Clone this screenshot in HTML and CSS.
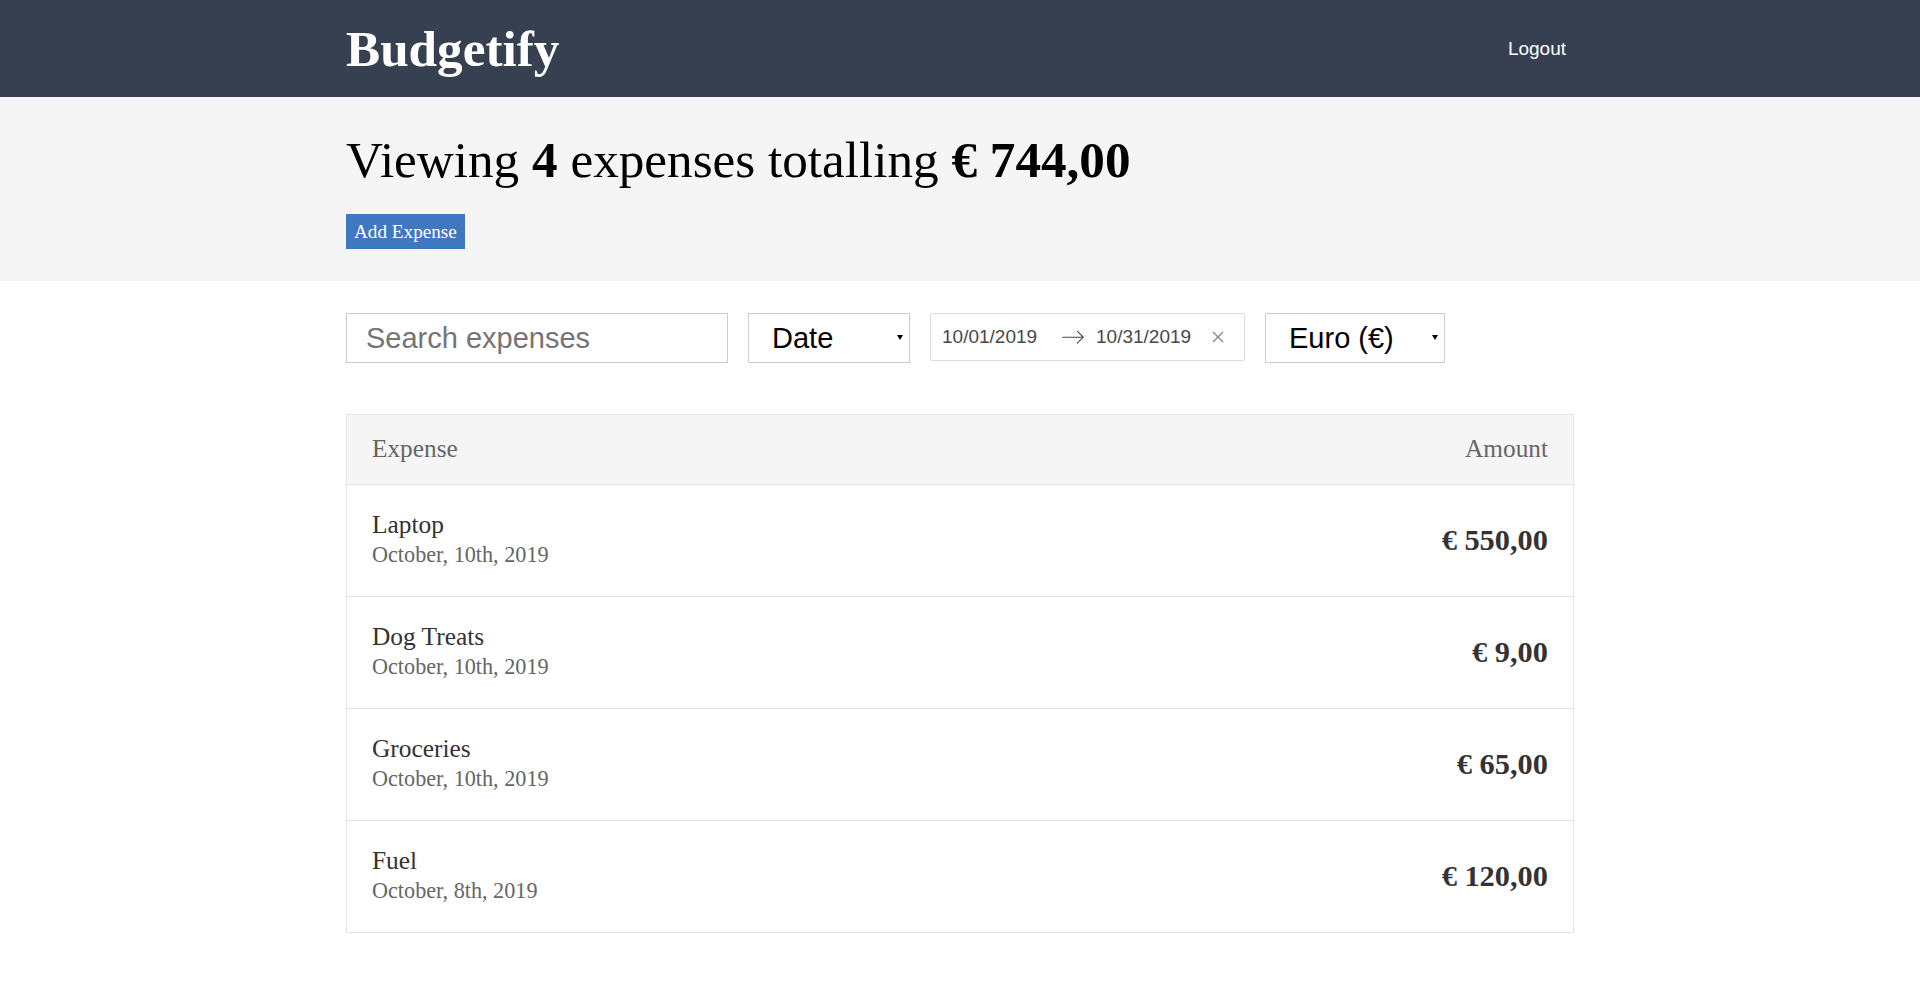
FILE: index.html
```html
<!DOCTYPE html>
<html lang="en">
<head>
<meta charset="utf-8">
<title>Budgetify</title>
<link rel="stylesheet" href="styles.css">
</head>
<body>
<header class="header">
  <div class="container header__content">
    <h1 class="header__title">Budgetify</h1>
    <button class="logout">Logout</button>
  </div>
</header>

<div class="page-header">
  <div class="container page-header__content">
    <h1 class="page-header__title">Viewing <b>4</b> expenses totalling <b>€ 744,00</b></h1>
    <button class="add-btn">Add Expense</button>
  </div>
</div>

<main class="container">
  <div class="filters">
    <input class="text-input" type="text" placeholder="Search expenses">
    <div class="select-wrap">
      <select class="select select--sort">
        <option>Date</option>
        <option>Amount</option>
      </select>
    </div>
    <div class="date-range">
      <input class="date-input" type="text" value="10/01/2019">
      <span class="date-arrow">
        <svg width="24" height="24" viewBox="0 0 1000 1000"><path d="M694.4 242.4l249.1 249.1c11 11 11 21 0 32L694.4 772.7c-5 5-10 7-16 7s-11-2-16-7c-11-11-11-21 0-32l210.1-210.1H67.1c-13 0-23-10-23-23s10-23 23-23h805.4L662.4 274.5c-21-21.1 11-53.1 32-32.1z"/></svg>
      </span>
      <input class="date-input date-input--end" type="text" value="10/31/2019">
      <span class="date-clear">
        <svg width="12" height="12" viewBox="0 0 12 12"><path d="M1 1L11 11M11 1L1 11"/></svg>
      </span>
    </div>
    <div class="select-wrap">
      <select class="select select--currency">
        <option>Euro (€)</option>
        <option>Dollar ($)</option>
      </select>
    </div>
  </div>

  <div class="list">
    <div class="list-header">
      <span>Expense</span>
      <span>Amount</span>
    </div>
    <div class="list-item">
      <div>
        <h3 class="item-title">Laptop</h3>
        <div class="item-date">October, 10th, 2019</div>
      </div>
      <h3 class="item-amount">€ 550,00</h3>
    </div>
    <div class="list-item">
      <div>
        <h3 class="item-title">Dog Treats</h3>
        <div class="item-date">October, 10th, 2019</div>
      </div>
      <h3 class="item-amount">€ 9,00</h3>
    </div>
    <div class="list-item">
      <div>
        <h3 class="item-title">Groceries</h3>
        <div class="item-date">October, 10th, 2019</div>
      </div>
      <h3 class="item-amount">€ 65,00</h3>
    </div>
    <div class="list-item">
      <div>
        <h3 class="item-title">Fuel</h3>
        <div class="item-date">October, 8th, 2019</div>
      </div>
      <h3 class="item-amount">€ 120,00</h3>
    </div>
  </div>
</main>
</body>
</html>
```

FILE: styles.css
```css
* { box-sizing: border-box; }

body {
  margin: 0;
  font-family: "Liberation Serif", "Times New Roman", serif;
  color: #333;
  background: #fff;
}

.container {
  width: 1228px;
  margin: 0 auto;
}

/* Top header */
.header {
  background: #364051;
}
.header__content {
  height: 97px;
  display: flex;
  align-items: center;
  justify-content: space-between;
}
.header__title {
  margin: 0;
  font-size: 51.2px;
  font-weight: 700;
  line-height: normal;
  color: #fff;
}
.logout {
  background: none;
  border: 0;
  color: #fff;
  font-family: "Liberation Sans", Arial, sans-serif;
  font-size: 19px;
  padding: 0 8px;
  cursor: pointer;
}

/* Page header band */
.page-header {
  background: #f5f5f5;
  padding: 33px 0 32px;
}
.page-header__content {
  display: flex;
  flex-direction: column;
  align-items: flex-start;
}
.page-header__title {
  margin: 0 0 25px;
  font-size: 51.2px;
  font-weight: 400;
  line-height: normal;
  color: #000;
}
.add-btn {
  background: #4078c0;
  color: #fff;
  border: 0;
  font-family: "Liberation Serif", "Times New Roman", serif;
  font-size: 19.2px;
  line-height: 23px;
  padding: 6px 8px;
  cursor: pointer;
}

/* Filters */
.filters {
  display: flex;
  align-items: flex-start;
  gap: 20px;
  margin: 32px 0 51px;
}
.text-input {
  width: 382px;
  height: 50px;
  border: 1px solid #cacccd;
  border-radius: 0;
  padding: 0 19px;
  font-family: "Liberation Sans", Arial, sans-serif;
  font-size: 29px;
  color: #000;
  outline: none;
}
.text-input::placeholder {
  color: #757575;
}
.select-wrap {
  position: relative;
}
.select-wrap::after {
  content: "";
  position: absolute;
  right: 7px;
  top: 22px;
  border-left: 3px solid transparent;
  border-right: 3px solid transparent;
  border-top: 5px solid #000;
  pointer-events: none;
}
.select {
  appearance: none;
  -webkit-appearance: none;
  height: 50px;
  border: 1px solid #cacccd;
  border-radius: 0;
  background: #fff;
  padding: 0 0 0 23px;
  font-family: "Liberation Sans", Arial, sans-serif;
  font-size: 29px;
  color: #000;
  outline: none;
}
.select--sort { width: 162px; }
.select--currency { width: 180px; }

.date-range {
  width: 315px;
  height: 48px;
  display: flex;
  align-items: center;
  border: 1px solid #dbdbdb;
  border-radius: 2px;
  background: #fff;
}
.date-input {
  width: 130px;
  border: 0;
  border-bottom: 2px solid transparent;
  padding: 11px 11px 9px;
  font-family: "Liberation Sans", Arial, sans-serif;
  font-size: 19px;
  line-height: 24px;
  color: #484848;
  background: transparent;
  outline: none;
}
.date-input--end {
  width: 120px;
}
.date-arrow {
  display: flex;
  width: 24px;
  height: 24px;
}
.date-arrow svg {
  fill: #484848;
}
.date-clear {
  display: flex;
  margin-left: 7px;
}
.date-clear svg {
  stroke: #82888a;
  stroke-width: 1.4;
  fill: none;
}

/* Expense list */
.list {
  border: 1px solid #e5e5e5;
}
.list-header {
  display: flex;
  justify-content: space-between;
  background: #f5f5f5;
  padding: 19px 25px 21px;
  font-size: 25.3px;
  line-height: 29px;
  color: #666;
  border-bottom: 1px solid #e5e5e5;
}
.list-item {
  display: flex;
  justify-content: space-between;
  align-items: center;
  padding: 25px;
  border-bottom: 1px solid #e5e5e5;
}
.list-item:last-child {
  border-bottom: 0;
}
.item-title {
  margin: 0;
  font-size: 25.4px;
  font-weight: 400;
  line-height: 28px;
  color: #333;
}
.item-date {
  font-size: 22.2px;
  line-height: 33px;
  color: #666;
}
.item-amount {
  margin: 0;
  font-size: 30.4px;
  font-weight: 700;
  color: #333;
}
```
